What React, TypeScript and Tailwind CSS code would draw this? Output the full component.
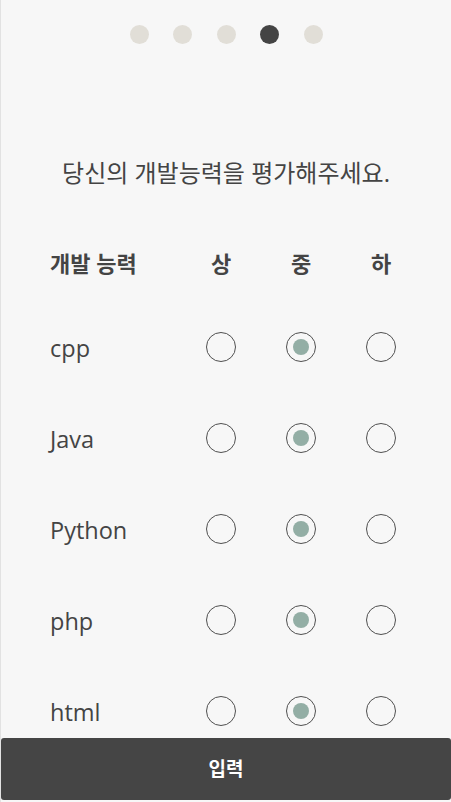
import { useState } from 'react';

const skills = ['cpp', 'Java', 'Python', 'php', 'html'];
const levels = ['상', '중', '하'];

function Radio({ checked, onClick }: { checked: boolean; onClick: () => void }) {
  return (
    <button
      type="button"
      onClick={onClick}
      className="flex h-[30px] w-[30px] items-center justify-center rounded-full border-[1.4px] border-[#505050]"
    >
      {checked && <span className="h-[16px] w-[16px] rounded-full bg-[#93aea5]" />}
    </button>
  );
}

export default function App() {
  const [values, setValues] = useState<Record<string, number>>({
    cpp: 1,
    Java: 1,
    Python: 1,
    php: 1,
    html: 1,
  });

  return (
    <div
      className="relative h-[802px] w-[451px] overflow-hidden border-l border-[#e2e2e2] bg-[#f7f7f7] text-[#444]"
      style={{ fontFamily: '"Open Sans", "Noto Sans CJK KR", sans-serif' }}
    >
      <div className="flex justify-center gap-[24.5px] pt-[25px]">
        {[0, 1, 2, 3, 4].map((i) => (
          <span
            key={i}
            className={`h-[19px] w-[19px] rounded-full ${i === 3 ? 'bg-[#444]' : 'bg-[#e1ded7]'}`}
          />
        ))}
      </div>

      <h1 className="mt-[114px] text-center text-[24px] leading-[30px]">
        당신의 개발능력을 평가해주세요.
      </h1>

      <div className="mt-[61px] grid grid-cols-[180px_80px_80px_80px] items-center text-[22px] leading-[28px] font-bold">
        <span className="pl-[49px]">개발 능력</span>
        {levels.map((l) => (
          <span key={l} className="text-center">
            {l}
          </span>
        ))}
      </div>

      <div className="mt-[24px]">
        {skills.map((s) => (
          <div key={s} className="grid h-[91px] grid-cols-[180px_80px_80px_80px] items-center">
            <span className="pl-[49px] pt-[5px] text-[23.5px]">{s}</span>
            {levels.map((l, i) => (
              <div key={l} className="flex justify-center">
                <Radio
                  checked={values[s] === i}
                  onClick={() => setValues((v) => ({ ...v, [s]: i }))}
                />
              </div>
            ))}
          </div>
        ))}
      </div>

      <button
        type="button"
        className="absolute bottom-[2px] left-0 right-0 h-[62px] rounded-[3px] bg-[#454545] text-[19px] font-bold text-white"
      >
        입력
      </button>
    </div>
  );
}
